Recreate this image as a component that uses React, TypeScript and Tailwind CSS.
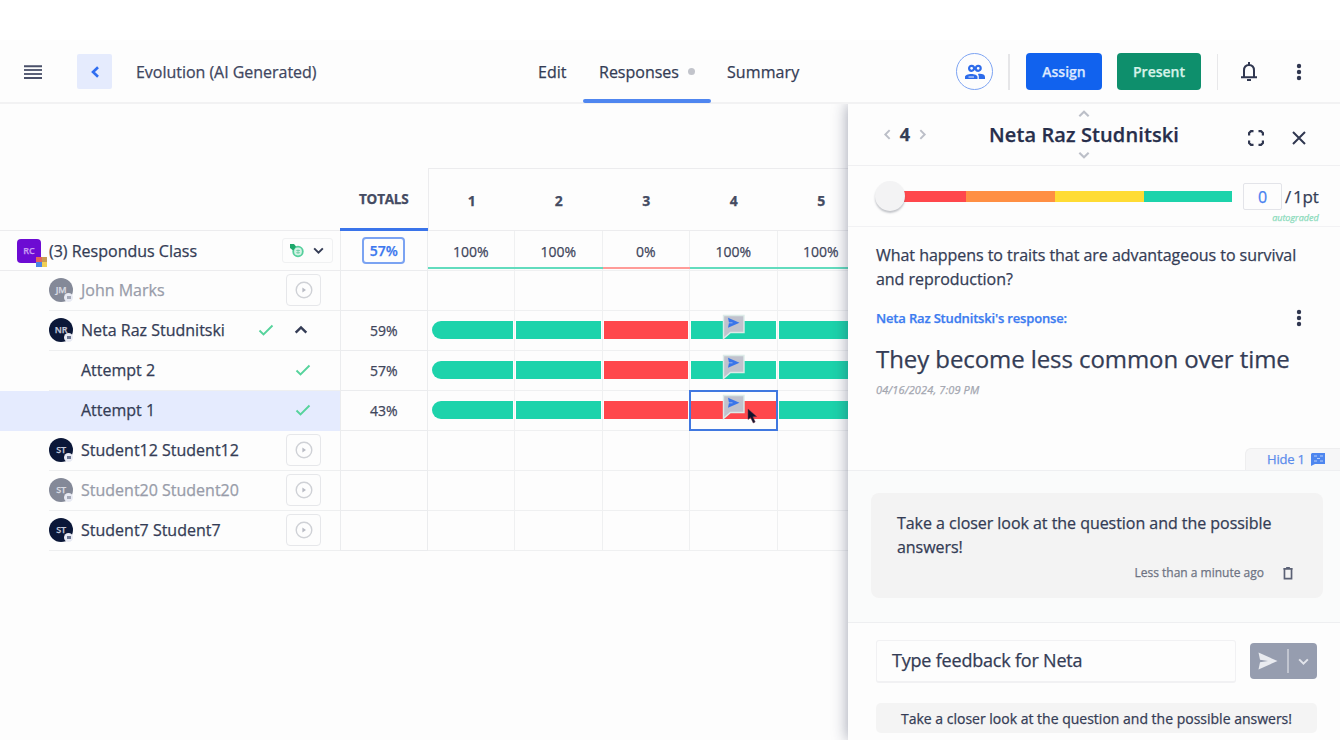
import React from "react";

const TEAL = "bg-[#1dd3ab]";
const RED = "bg-[#ff474c]";

type IconProps = { className?: string };

function Chevron({ dir, className = "" }: { dir: "up" | "down" | "left" | "right"; className?: string }) {
  const d = {
    up: "M2 8l4-4 4 4",
    down: "M2 4l4 4 4-4",
    left: "M8 2L4 6l4 4",
    right: "M4 2l4 4-4 4",
  }[dir];
  return (
    <svg viewBox="0 0 12 12" className={className} fill="none" stroke="currentColor" strokeWidth="1.8">
      <path d={d} />
    </svg>
  );
}

function Dots({ className = "" }: IconProps) {
  return (
    <svg viewBox="0 0 6 18" className={`h-[18px] w-[6px] ${className}`} fill="currentColor">
      <circle cx="3" cy="3" r="2.2" />
      <circle cx="3" cy="9" r="2.2" />
      <circle cx="3" cy="15" r="2.2" />
    </svg>
  );
}

function Check({ className = "" }: IconProps) {
  return (
    <svg viewBox="0 0 16 12" className={`h-3 w-4 ${className}`} fill="none" stroke="#56d39c" strokeWidth="1.9">
      <path d="M1.5 6.5L5.5 10.5L14.5 1.5" />
    </svg>
  );
}

function PlayButton() {
  return (
    <div className="mr-[19px] flex h-8 w-[35px] items-center justify-center rounded-[4px] border border-[#e6e7ea]">
      <svg viewBox="0 0 18 18" className="h-[18px] w-[18px]" fill="none" stroke="#cfd1d6" strokeWidth="1.4">
        <circle cx="9" cy="9" r="7.8" />
        <path d="M7.4 6.6L11 9L7.4 11.4Z" fill="#b9bbc4" stroke="none" />
      </svg>
    </div>
  );
}

function Avatar({ initials, faded }: { initials: string; faded?: boolean }) {
  return (
    <div
      className={`relative flex h-6 w-6 shrink-0 items-center justify-center rounded-full text-[9px] font-semibold tracking-tight ${
        faded ? "bg-[#848998] text-[#d9dbe2]" : "bg-[#0b1738] text-[#c3c8d8]"
      }`}
    >
      {initials}
      <span className="absolute right-0 bottom-0 flex h-[9px] w-[9px] items-center justify-center rounded-full bg-[#e8eaf3]">
        <span className={`h-[3px] w-[4px] ${faded ? "bg-[#a5a9b8]" : "bg-[#6d7590]"}`} />
      </span>
    </div>
  );
}

function FeedbackFlag() {
  return (
    <svg viewBox="0 0 24 26" className="absolute top-[3px] left-[32px] h-[26px] w-6">
      <path d="M1.5 1.5H22V18.5H8.5L1.5 24.5Z" fill="#c0c2cd" stroke="#dcebe8" strokeWidth="1.4" />
      <path d="M6 3.8L17.5 8.8L6 13.8L7 8.8Z" fill="#3a75ea" />
      <path d="M7 8.8H10.5" stroke="#b3c2e8" strokeWidth="0.8" />
    </svg>
  );
}

function Cursor() {
  return (
    <svg viewBox="0 0 12 16" className="absolute top-[17px] left-[57px] z-10 h-4 w-3">
      <path d="M1 1L1 11.5L3.6 9.4L6.2 15L8.2 14L5.8 8.8L9.6 8.6Z" fill="#10152e" stroke="#6b3047" strokeWidth="0.5" />
    </svg>
  );
}

type Row = {
  name: string;
  initials?: string;
  faded?: boolean;
  selected?: boolean;
  expanded?: boolean;
  attempt?: boolean;
  total?: string;
  cells?: string[];
};

const rows: Row[] = [
  { name: "John Marks", initials: "JM", faded: true },
  { name: "Neta Raz Studnitski", initials: "NR", expanded: true, total: "59%", cells: ["g", "g", "r", "g", "g"] },
  { name: "Attempt 2", attempt: true, total: "57%", cells: ["g", "g", "r", "g", "g"] },
  { name: "Attempt 1", attempt: true, selected: true, total: "43%", cells: ["g", "g", "r", "r", "g"] },
  { name: "Student12 Student12", initials: "ST" },
  { name: "Student20 Student20", initials: "ST", faded: true },
  { name: "Student7 Student7", initials: "ST" },
];

const cols = "grid grid-cols-[340px_87.5px_87.5px_87.5px_87.5px_87.5px_87.5px]";

function StudentRow({ row }: { row: Row }) {
  return (
    <div className={`${cols} h-10`}>
      <div className={`flex ${row.selected ? "bg-[#e5ebfe]" : ""}`}>
        <div className={`ml-[49px] flex flex-1 items-center border-b pb-px ${row.selected ? "border-[#e5ebfe]" : "border-[#eeeff0]"}`}>
          {row.initials ? <Avatar initials={row.initials} faded={row.faded} /> : <div className="w-6" />}
          <span className={`ml-2 flex-1 text-[16px] ${row.faded ? "text-[#989ca9]" : "text-[#343c55]"}`}>{row.name}</span>
          {row.expanded && (
            <>
              <Check className="mr-[19px]" />
              <Chevron dir="up" className="mr-[31px] h-4 w-4 text-[#343c55]" />
            </>
          )}
          {row.attempt && <Check className="mr-[29px]" />}
          {!row.expanded && !row.attempt && <PlayButton />}
        </div>
      </div>
      <div className="flex items-center justify-center border-x border-b border-[#ebecee] pb-px text-[14px] text-[#3f465c]">
        {row.total}
      </div>
      {[0, 1, 2, 3, 4].map((i) => {
        const c = row.cells?.[i];
        const active = row.selected && i === 3;
        return (
          <div key={i} className="relative flex items-center border-r border-b border-[#eff0f1] pb-px">
            {c && (
              <div
                className={`h-[18px] flex-1 ${c === "g" ? TEAL : RED} ${i === 0 ? "ml-1 rounded-l-full" : "ml-[1px]"} mr-[1px]`}
              />
            )}
            {active && <div className="absolute -top-[1px] -right-[1px] bottom-[-1px] -left-[1px] z-10 border-2 border-[#4078e0]" />}
            {c && i === 3 && <FeedbackFlag />}
            {active && <Cursor />}
          </div>
        );
      })}
    </div>
  );
}

function Header() {
  return (
    <header className="relative flex h-16 shrink-0 items-center border-b-2 border-[#f2f2f3] pt-px text-[16px] text-[#3f4660]">
      <svg viewBox="0 0 18 14" className="ml-[24px] h-[14px] w-[18px]" strokeWidth="2">
        <path d="M0 1.2H18M0 12.9H18" stroke="#4a5069" />
        <path d="M0 5.1H18M0 9H18" stroke="#5b6178" />
      </svg>
      <div className="ml-[35px] flex h-[35px] w-[35px] items-center justify-center rounded-[2px] bg-[#e5ebfd]">
        <svg viewBox="0 0 10 12" className="h-3 w-[10px]" fill="none" stroke="#2f6df0" strokeWidth="2.6">
          <path d="M8 1.2L3 6L8 10.8" />
        </svg>
      </div>
      <span className="ml-[24px] w-[402px] tracking-[-0.03px]">Evolution (AI Generated)</span>
      <nav className="flex h-full items-center text-[#343c55]">
        <span className="w-[45px]">Edit</span>
        <div className="relative flex h-full w-[128px] items-center pl-4">
          Responses
          <span className="ml-[9px] h-[7px] w-[7px] rounded-full bg-[#c2c4cb]" />
          <span className="absolute -bottom-[1px] left-0 h-1 w-full rounded-sm bg-[#4f86f0]" />
        </div>
        <span className="ml-4 tracking-[0.1px]">Summary</span>
      </nav>
      <div className="ml-auto flex items-center">
        <div className="flex h-[37px] w-[37px] items-center justify-center rounded-full border-[1.5px] border-[#7da4f3]">
          <svg viewBox="0 0 22 16" className="h-4 w-[22px]">
            <g fill="none" stroke="#2d6bea" strokeWidth="2.2">
              <circle cx="7.6" cy="4.3" r="2.5" />
              <circle cx="14.2" cy="4.3" r="2.5" />
            </g>
            <path d="M1 15V13C1 9 13.5 9 13.5 13V15ZM14.8 15V12.2L14 10C18 9.4 21 10.8 21 13V15Z" fill="#2d6bea" />
            <path d="M4.5 13H10" stroke="#fff" strokeWidth="0.9" />
          </svg>
        </div>
        <div className="ml-[15px] h-9 w-[2px] bg-[#e6e6e8]" />
        <div className="ml-4 flex h-[37px] w-[76px] items-center justify-center rounded-[4px] bg-[#1162ee] text-[14px] font-semibold text-[#dbe7ff]">
          Assign
        </div>
        <div className="ml-[15px] flex h-[37px] w-[84px] items-center justify-center rounded-[4px] bg-[#0e8f6c] text-[14px] font-semibold text-[#d5f2e8]">
          Present
        </div>
        <div className="ml-4 h-9 w-[1px] bg-[#e8e8ea]" />
        <svg viewBox="0 0 18 21" className="ml-[22px] h-[21px] w-[18px]" fill="none" stroke="#303750" strokeWidth="2">
          <path d="M4 16V9.5C4 6 6 4 9 4S14 6 14 9.5V16M1 16.2H17" />
          <path d="M9 1V4M7 19H11" />
        </svg>
        <Dots className="mr-[38px] ml-[38px] text-[#303750]" />
      </div>
    </header>
  );
}

function Results() {
  const pct = ["100%", "100%", "0%", "100%", "100%"];
  return (
    <main className="w-[848px] shrink-0 overflow-hidden pt-16">
      <div className={`${cols} h-[63px] text-[14px] font-bold text-[#444b62]`}>
        <div className="border-b border-[#ececee]" />
        <div className="flex items-center justify-center border-b-[3px] border-[#3a74ea] pt-[3px] text-[13.5px]">
          <span className="tracking-[-0.2px]">TOTALS</span>
        </div>
        {[1, 2, 3, 4, 5].map((n) => (
          <div
            key={n}
            className={`flex items-center justify-center border-t border-b border-[#ececee] pt-[1px] ${n === 1 ? "border-l" : ""}`}
          >
            {n}
          </div>
        ))}
      </div>
      <div className={`${cols} h-10 text-[14px] text-[#3f465c]`}>
        <div className="flex items-center border-b border-[#ececee] pl-[17px]">
          <div className="relative flex h-6 w-6 items-center justify-center rounded-[4px] bg-[#6d0bd3] text-[9px] font-semibold text-[#c99cf3]">
            RC
            <span className="absolute -right-[6px] -bottom-[4px] grid h-[10px] w-[11px] grid-cols-2">
              <span className="bg-[#e5665c]" />
              <span className="bg-[#c79b52]" />
              <span className="bg-[#4b83e8]" />
              <span className="bg-[#f0cf55]" />
            </span>
          </div>
          <span className="ml-2 flex-1 text-[16px] text-[#343c55]">(3) Respondus Class</span>
          <div className="mr-[7px] flex h-[25px] w-[51px] items-center rounded-[3px] border border-[#f0f1f2] pl-[6px]">
            <svg viewBox="0 0 16 15" className="h-[15px] w-4" fill="none">
              <circle cx="9" cy="8.5" r="4.8" fill="#d3f3e5" stroke="#55cf9c" strokeWidth="1.8" />
              <path d="M1 1H5L7 3.5L4.2 7.5L1 5Z" fill="#1ea76b" />
              <path d="M7.2 7.5H11M7.2 9.7H11M9 6.5V11" stroke="#6cc9a1" strokeWidth="0.8" />
            </svg>
            <Chevron dir="down" className="ml-[7px] h-[13px] w-[13px] text-[#343c55]" />
          </div>
        </div>
        <div className="flex items-center justify-center border-x border-b border-[#ebecee]">
          <span className="flex h-[27px] w-[43px] items-center justify-center rounded-[4px] border-2 border-[#7ba3f2] font-semibold text-[#3b77ee]">
            57%
          </span>
        </div>
        {pct.map((p, i) => (
          <div key={i} className="flex flex-col border-r border-b border-[#eff0f1]">
            <div className="flex flex-1 items-center justify-center pt-[4px]">{p}</div>
            <div className={`-mr-[1px] mb-px h-[2px] ${p === "0%" ? "bg-[#ff9b98]" : "bg-[#62dcbe]"}`} />
          </div>
        ))}
      </div>
      {rows.map((r) => (
        <StudentRow key={r.name} row={r} />
      ))}
    </main>
  );
}

function Panel() {
  return (
    <aside className="relative z-20 flex w-[492px] flex-col bg-[#fdfdfd] text-[#343c55] shadow-[-1px_0_14px_rgba(30,36,70,0.38)]">
      <div className="flex h-[62px] shrink-0 items-center border-b border-[#f0f0f2]">
        <div className="ml-[33px] flex w-[48px] items-center justify-between text-[18px] font-bold">
          <Chevron dir="left" className="h-[13px] w-[13px] text-[#bcbfc8]" />
          4
          <Chevron dir="right" className="h-[13px] w-[13px] text-[#bcbfc8]" />
        </div>
        <div className="ml-[59px] flex w-[192px] flex-col items-center">
          <Chevron dir="up" className="h-[14px] w-[14px] text-[#bcbfc8]" />
          <span className="text-[20px] leading-[27px] font-semibold tracking-[0.1px] whitespace-nowrap text-[#272e4b]">
            Neta Raz Studnitski
          </span>
          <Chevron dir="down" className="h-[14px] w-[14px] text-[#bcbfc8]" />
        </div>
        <svg viewBox="0 0 16 16" className="mt-[6px] ml-[68px] h-4 w-4" fill="none" stroke="#303750" strokeWidth="2.2">
          <path d="M1.1 5.5V3L3 1.1H5.5M10.5 1.1H13L14.9 3V5.5M14.9 10.5V13L13 14.9H10.5M5.5 14.9H3L1.1 13V10.5" />
        </svg>
        <svg viewBox="0 0 14 14" className="mt-[6px] ml-[28px] h-[14px] w-[14px]" stroke="#303750" strokeWidth="2">
          <path d="M1 1L13 13M13 1L1 13" />
        </svg>
      </div>
      <div className="flex h-[61px] shrink-0 border-b border-[#f2f2f4] pl-[27px]">
        <div className="relative z-10 mt-[15px] h-[30px] w-[30px] rounded-full bg-[#f3f3f4] shadow-[0_2px_2px_rgba(90,95,110,0.35)]" />
        <div className="mt-[25px] -ml-[1px] flex h-[11px] w-[328px]">
          <div className="w-[62px] bg-[#ff474c]" />
          <div className="w-[89px] bg-[#ff8f43]" />
          <div className="w-[89px] bg-[#ffdc34]" />
          <div className="flex-1 bg-[#1dd3ab]" />
        </div>
        <div className="ml-[11px] flex flex-col">
          <div className="mt-[17px] flex items-center text-[16px]">
            <span className="flex h-[27px] w-[39px] items-center justify-center rounded-[2px] border-[1.5px] border-[#e3e4e9] text-[#4681f0]">
              0
            </span>
            <span className="ml-[3px] text-[17px] tracking-[-0.2px]">
              /<span className="ml-[2px]">1pt</span>
            </span>
          </div>
          <span className="mt-[2px] self-end text-[9px] leading-[12px] text-[#8adbbb] italic">autograded</span>
        </div>
      </div>
      <div className="flex h-[243px] shrink-0 flex-col pt-[16px] pl-7">
        <p className="w-[440px] text-[16px] leading-6 tracking-[-0.04px]">
          What happens to traits that are advantageous to survival
          <br />
          and reproduction?
        </p>
        <div className="mt-[17px] flex items-center justify-between pr-[38px]">
          <span className="text-[13px] leading-[20px] font-semibold tracking-[-0.17px] text-[#3c7bf0]">
            Neta Raz Studnitski's response:
          </span>
          <Dots className="text-[#303750]" />
        </div>
        <p className="mt-[15px] text-[24px] leading-[32px] tracking-[-0.08px] whitespace-nowrap">
          They become less common over time
        </p>
        <p className="mt-[7px] text-[11px] leading-4 tracking-[0.12px] text-[#a3a6b0] italic">04/16/2024, 7:09 PM</p>
        <div className="mt-auto flex h-[22px] w-[95px] items-center self-end rounded-tl-[6px] border-t border-l border-[#eeeeef] bg-[#f6f6f7] pl-[21px] text-[13px] text-[#5b8cec]">
          <span className="tracking-[-0.2px]">Hide 1</span>
          <svg viewBox="0 0 14 13" className="ml-[6px] h-[13px] w-[14px]">
            <path d="M1 0H14V11H4L0 13V1Z" fill="#4e86ef" />
            <path d="M3 3H6M9 3H12M3 8H6M9 8H12M6 5.5H9" stroke="#b9cff8" />
          </svg>
        </div>
      </div>
      <div className="h-[153px] shrink-0 border-y border-[#eeeff1] bg-[#fafbfb] pt-[22px] pr-[17px] pl-[23px]">
        <div className="flex h-[105px] flex-col rounded-[8px] bg-[#f3f3f3] pt-[18px] pr-[29px] pl-[26px]">
          <p className="text-[16px] leading-6 tracking-[-0.04px]">
            Take a closer look at the question and the possible
            <br />
            answers!
          </p>
          <div className="mt-[6px] flex items-center justify-end text-[12px] leading-4 text-[#6e7383]">
            Less than a minute ago
            <svg viewBox="0 0 12 14" className="ml-[18px] h-[13px] w-3" fill="none" stroke="#5b6175" strokeWidth="1.8">
              <path d="M2.2 3V12.5H9.8V3M1 2H11M4 1H8" />
            </svg>
          </div>
        </div>
      </div>
      <div className="flex h-[76px] shrink-0 items-center pl-7">
        <div className="flex h-[43px] w-[360px] items-center rounded-[3px] border border-b-2 border-[#f1f1f3] pl-[15px] text-[18px] tracking-[-0.2px]">
          Type feedback for Neta
        </div>
        <div className="ml-[14px] flex h-[36px] w-[67px] items-center rounded-[4px] bg-[#969daf] pl-[8px]">
          <svg viewBox="0 0 20 18" className="h-[18px] w-5">
            <path d="M0.5 0.5L19.5 9L0.5 17.5L2 10.2L10 9L2 7.8Z" fill="#e9ebf0" />
          </svg>
          <div className="ml-[9px] h-6 w-[2px] bg-[#c1c5d0]" />
          <Chevron dir="down" className="ml-[8px] h-[13px] w-[13px] text-[#e3e5eb]" />
        </div>
      </div>
      <div className="mt-[4px] ml-7 flex h-[30px] w-[441px] shrink-0 items-center justify-center rounded-[5px] bg-[#f4f4f4] text-[14px] whitespace-nowrap">
        Take a closer look at the question and the possible answers!
      </div>
    </aside>
  );
}

export default function App() {
  return (
    <div className="flex h-[740px] w-[1340px] flex-col overflow-hidden bg-white pt-10 font-['Open_Sans','Noto_Sans',sans-serif] font-medium [-webkit-text-stroke:0.25px]">
      <div className="flex min-h-0 flex-1 flex-col bg-[#fdfdfd]">
        <Header />
        <div className="flex min-h-0 flex-1 overflow-hidden">
          <Results />
          <Panel />
        </div>
      </div>
    </div>
  );
}
